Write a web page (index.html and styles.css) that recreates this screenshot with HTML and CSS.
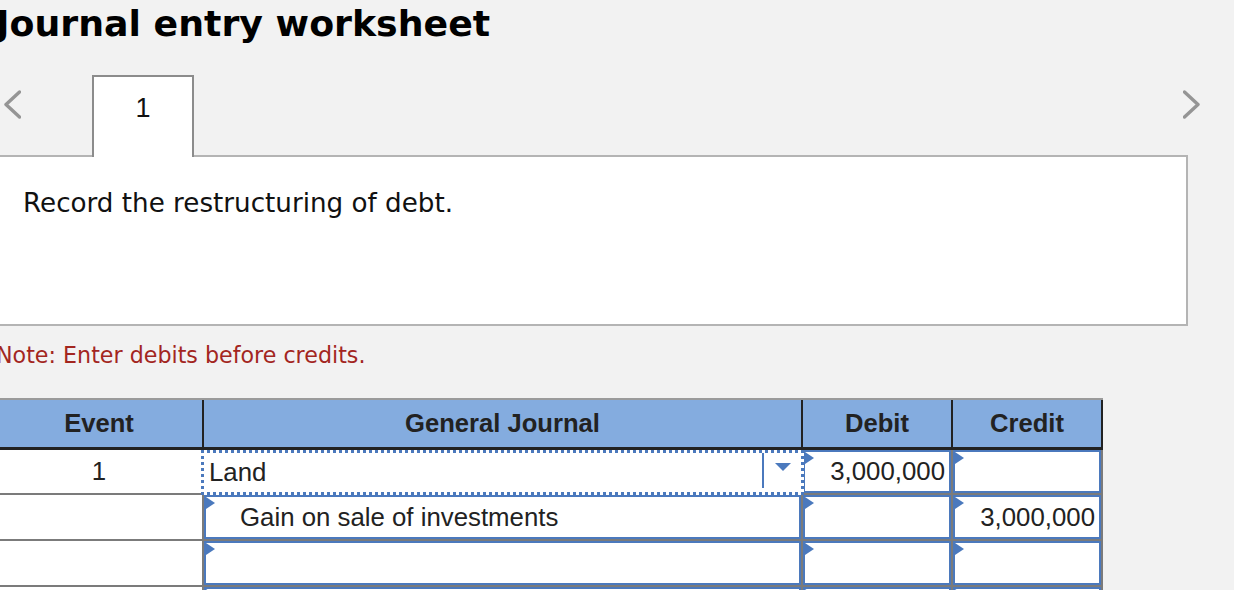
FILE: index.html
```html
<!DOCTYPE html>
<html lang="en">
<head>
<meta charset="utf-8">
<title>Journal entry worksheet</title>
<link rel="stylesheet" href="styles.css">
</head>
<body>
<div class="page">
  <h1 class="title">Journal entry worksheet</h1>
  <div class="tabbar">
    <button class="nav nav-prev" aria-label="Previous">
      <svg viewBox="0 0 17 29" width="17" height="29"><path d="M15.5 2 L2 14.5 L15.5 27" fill="none" stroke="#959595" stroke-width="3.4" stroke-linecap="round" stroke-linejoin="round"/></svg>
    </button>
    <div class="tab">1</div>
    <button class="nav nav-next" aria-label="Next">
      <svg viewBox="0 0 17 29" width="17" height="29"><path d="M1.5 2 L15 14.5 L1.5 27" fill="none" stroke="#959595" stroke-width="3.4" stroke-linecap="round" stroke-linejoin="round"/></svg>
    </button>
  </div>
  <div class="panel"><p>Record the restructuring of debt.</p></div>
  <p class="note">Note: Enter debits before credits.</p>
  <div class="journal">
    <div class="jhead">
      <div>Event</div>
      <div>General Journal</div>
      <div>Debit</div>
      <div>Credit</div>
    </div>
    <div class="jbody">
      <div class="ev">1</div>
      <div class="focus"><span class="val">Land</span><span class="dd"></span></div>
      <div class="in num">3,000,000</div>
      <div class="in num"></div>

      <div class="ev"></div>
      <div class="in indent">Gain on sale of investments</div>
      <div class="in num"></div>
      <div class="in num">3,000,000</div>

      <div class="ev"></div>
      <div class="in"></div>
      <div class="in num"></div>
      <div class="in num"></div>

      <div class="ev"></div>
      <div class="in"></div>
      <div class="in num"></div>
      <div class="in num"></div>
    </div>
  </div>
</div>
</body>
</html>
```

FILE: styles.css
```css
* { box-sizing: border-box; }
html, body { margin: 0; padding: 0; }
body {
  background: #f2f2f2;
  font-family: "DejaVu Sans", Verdana, sans-serif;
  overflow: hidden;
}
.page {
  margin-left: -4px;
  width: 1192px;
}
.title {
  margin: 2px 0 0;
  font-size: 36.3px;
  line-height: 44px;
  font-weight: bold;
  color: #000;
}
.tabbar {
  display: flex;
  align-items: flex-start;
  height: 82px;
  margin-top: 29px;
  margin-bottom: -2px;
}
.nav {
  display: block;
  width: 17px;
  height: 29px;
  margin-top: 15px;
  padding: 0;
  border: 0;
  background: none;
}
.nav svg { display: block; }
.nav-prev { margin-left: 8px; }
.nav-next { margin-left: auto; margin-right: -12px; }
.tab {
  position: relative;
  z-index: 1;
  margin-left: 71px;
  width: 102px;
  height: 82px;
  border: 2px solid #8c8c8c;
  border-bottom: 0;
  background: #fff;
  padding-top: 16px;
  text-align: center;
  font: 27px/31px "Liberation Sans", Arial, sans-serif;
  color: #111;
}
.panel {
  height: 171px;
  border: 2px solid #b4b4b4;
  background: #fff;
  padding: 31px 25px;
}
.panel p {
  margin: 0;
  font-size: 26.2px;
  line-height: 30px;
  color: #111;
}
.note {
  margin: 16px 0 30px;
  font-size: 22.2px;
  line-height: 26px;
  color: #a3261f;
}
.journal {
  width: 1107px;
  font-family: "Liberation Sans", Arial, sans-serif;
  color: #222;
}
.jhead {
  display: grid;
  grid-template-columns: 206px 597px 148px 148px;
  column-gap: 2px;
  padding-right: 2px;
  padding-bottom: 3px;
  background: #222;
  border-top: 2px solid #9b9b9b;
}
.jhead > div {
  height: 47px;
  background: #84acdf;
  display: flex;
  align-items: center;
  justify-content: center;
  font-weight: bold;
  font-size: 25.6px;
}
.jbody {
  display: grid;
  grid-template-columns: 206px 597px 148px 148px;
  grid-template-rows: 43px 44px 44px 44px;
  gap: 2px;
  padding-right: 2px;
  background: #7b7b7b;
}
.ev {
  background: #fff;
  display: flex;
  align-items: center;
  justify-content: center;
  font-size: 25.8px;
}
.in {
  position: relative;
  background: #fff;
  border: 2px solid #4b79bd;
  display: flex;
  align-items: center;
  padding: 0 4px;
  font-size: 25.8px;
  white-space: nowrap;
}
.in::before {
  content: "";
  position: absolute;
  left: 0;
  top: 0;
  border-left: 9px solid #4b79bd;
  border-top: 6px solid transparent;
  border-bottom: 6px solid transparent;
}
.num { justify-content: flex-end; }
.indent { padding-left: 34px; }
.focus {
  position: relative;
  z-index: 1;
  margin: 0 -3px -2px -3px;
  border: 3px dotted #4b79bd;
  background: #fff;
  display: flex;
  align-items: stretch;
  font-size: 25.8px;
}
.focus .val {
  flex: 1;
  display: flex;
  align-items: center;
  padding-left: 5px;
}
.dd {
  width: 39px;
  margin-bottom: 4px;
  border-left: 2px solid #4b79bd;
  display: flex;
  align-items: center;
  justify-content: center;
  padding-bottom: 7px;
}
.dd::after {
  content: "";
  border-top: 8px solid #4b79bd;
  border-left: 8px solid transparent;
  border-right: 8px solid transparent;
}
```
